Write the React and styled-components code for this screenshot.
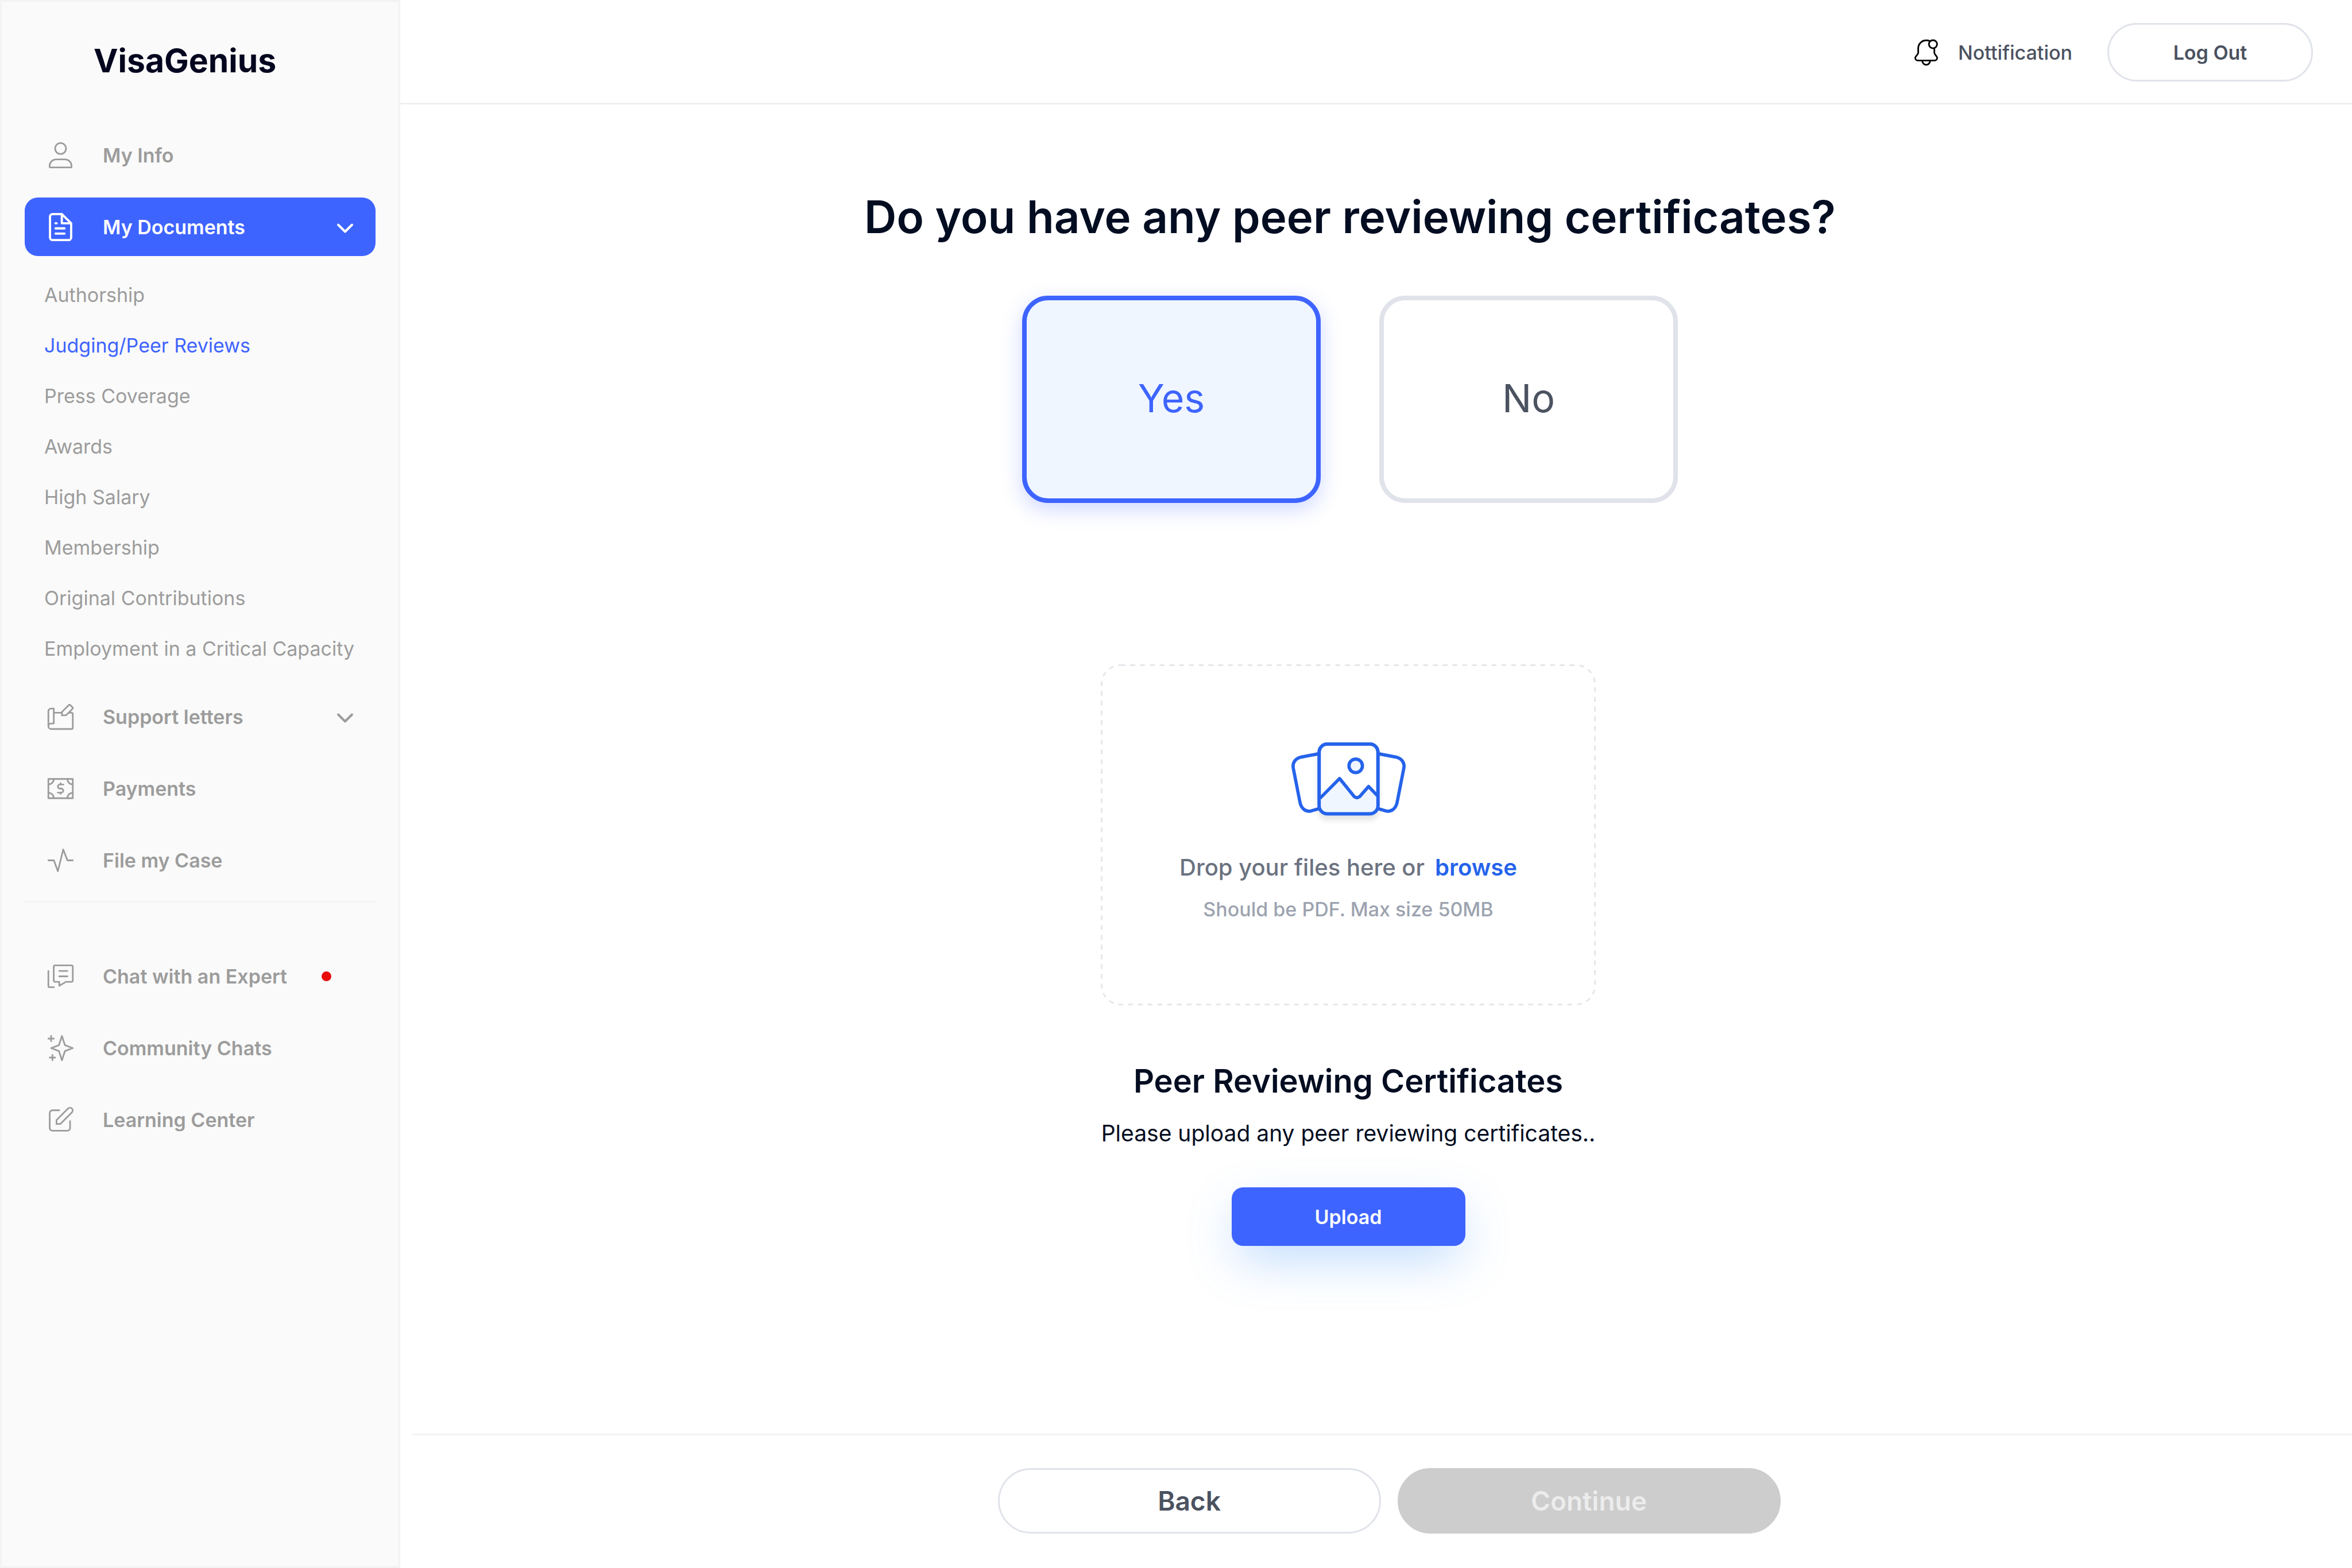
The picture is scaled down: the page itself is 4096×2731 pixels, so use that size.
import React, { useState } from 'react';
import styled, { createGlobalStyle, css } from 'styled-components';

const color = {
  ink: '#030d21',
  brand: '#3e64ff',
  link: '#2563eb',
  tint: '#eff6ff',
  slate: '#4b5260',
  muted: '#9c9c9c',
  line: '#f3f3f3',
  outline: '#e0e3ea',
};

const GlobalStyle = createGlobalStyle`
  *, *::before, *::after { box-sizing: border-box; }
  body { margin: 0; background: #fff; color: ${color.ink}; font-family: Inter, "Liberation Sans", sans-serif; }
  h1, h2, p, ul { margin: 0; padding: 0; }
  ul { list-style: none; }
  a { color: inherit; text-decoration: none; }
  button { margin: 0; padding: 0; border: 0; background: none; color: inherit; font: inherit; cursor: pointer; }
  svg { display: block; flex: none; }
`;

const Page = styled.div`
  display: flex;
  min-height: 100vh;
`;

/* Sidebar */

const Sidebar = styled.aside`
  flex: none;
  width: 697px;
  padding: 68px 40px 0;
  background: #fafafa;
  border: 3px solid ${color.line};
`;

const Logo = styled.a`
  display: block;
  width: fit-content;
  margin: 0 0 78px 120px;
  font-size: 57px;
  font-weight: 700;
  line-height: 70px;
  color: #04061f;
`;

const Menu = styled.ul`
  display: flex;
  flex-direction: column;
  gap: 23px;
`;

const itemStyle = css`
  display: flex;
  align-items: center;
  width: 100%;
  height: 102px;
  padding: 0 29px 0 37px;
  border-radius: 23px;
  gap: 48px;
  font-size: 34px;
  font-weight: 600;
  text-align: left;
  color: ${(p) => (p.$active ? '#fff' : color.muted)};
  background: ${(p) => (p.$active ? color.brand : 'transparent')};
`;

const ItemLink = styled.a`${itemStyle}`;
const ItemButton = styled.button`${itemStyle}`;

const Unread = styled.span`
  width: 17px;
  height: 17px;
  margin-left: 12px;
  border-radius: 50%;
  background: #e90a0a;
`;

const Submenu = styled.ul`
  padding: 24px 34px 0;
`;

const SubLink = styled.a`
  display: block;
  font-size: 34px;
  line-height: 88px;
  white-space: nowrap;
  color: ${(p) => (p.$active ? color.brand : color.muted)};
`;

const Divider = styled.hr`
  height: 3px;
  margin: 20px 0 77px;
  border: 0;
  background: ${color.line};
`;

/* Main column */

const Main = styled.div`
  display: flex;
  flex: 1;
  flex-direction: column;
  min-width: 0;
`;

const Header = styled.header`
  display: flex;
  align-items: center;
  justify-content: flex-end;
  height: 182px;
  padding: 3px 68px 0 0;
  gap: 61px;
  border-bottom: 3px solid #eef0f3;
`;

const Notification = styled.a`
  display: flex;
  align-items: center;
  gap: 30px;
  font-size: 34px;
  font-weight: 500;
  color: ${color.slate};

  svg { color: #000; }
`;

const PillButton = styled.button`
  width: ${(p) => (p.$large ? '667px' : '358px')};
  height: ${(p) => (p.$large ? '114px' : '102px')};
  border: 3px solid ${(p) => (p.disabled ? '#cdcdcd' : color.outline)};
  border-radius: 57px;
  background: ${(p) => (p.disabled ? '#cdcdcd' : '#fff')};
  color: ${(p) => (p.disabled ? '#ececec' : color.slate)};
  font-size: ${(p) => (p.$large ? '46px' : '34px')};
  font-weight: 600;
`;

const Question = styled.section`
  display: flex;
  flex-direction: column;
  align-items: center;
  padding: 148px 91px 0 0;
  gap: 89px;
`;

const Title = styled.h1`
  font-size: 78px;
  font-weight: 600;
  line-height: 96px;
`;

const Choices = styled.div`
  display: flex;
  gap: 102px;
`;

const Choice = styled.button`
  width: 520px;
  height: 361px;
  padding-bottom: 6px;
  border: 8px solid ${(p) => (p.$selected ? color.brand : color.outline)};
  border-radius: 45px;
  background: ${(p) => (p.$selected ? color.tint : '#fff')};
  box-shadow: ${(p) => (p.$selected ? '0 11px 34px rgba(62, 100, 255, 0.25)' : 'none')};
  color: ${(p) => (p.$selected ? color.brand : color.slate)};
  font-size: 68px;
`;

const UploadSection = styled.section`
  display: flex;
  flex: 1;
  flex-direction: column;
  align-items: center;
  padding: 281px 97px 0 0;
`;

const DropZone = styled.div`
  position: relative;
  display: flex;
  flex-direction: column;
  align-items: center;
  width: 862px;
  height: 594px;
  padding-top: 136px;
`;

const DashedOutline = styled.svg`
  position: absolute;
  inset: 0;
  width: 100%;
  height: 100%;
  pointer-events: none;
`;

const DropText = styled.p`
  display: flex;
  margin-top: 49px;
  gap: 18px;
  font-size: 40px;
  font-weight: 500;
  line-height: 48px;
  color: #6b7280;
`;

const Browse = styled.button`
  font-weight: 600;
  color: ${color.link};
`;

const Hint = styled.p`
  margin-top: 29px;
  font-size: 34px;
  font-weight: 500;
  line-height: 40px;
  color: #9ca3af;
`;

const Subtitle = styled.h2`
  margin-top: 97px;
  font-size: 56px;
  font-weight: 600;
  line-height: 70px;
`;

const Description = styled.p`
  margin-top: 32px;
  font-size: 39px;
  line-height: 48px;
`;

const UploadButton = styled.button`
  width: 407px;
  height: 102px;
  margin-top: 70px;
  border-radius: 20px;
  background: ${color.brand};
  box-shadow: 0 31px 85px -12px rgba(77, 155, 250, 0.4);
  color: #fff;
  font-size: 34px;
  font-weight: 600;
`;

const Footer = styled.footer`
  display: flex;
  justify-content: center;
  margin-left: 21px;
  padding: 57px 0 60px 24px;
  gap: 29px;
  border-top: 3px solid ${color.line};
`;

/* Icons */

const Glyph = ({ weight = 1, children }) => (
  <svg width="51" height="51" viewBox="-1 -1 18 18" fill="none" stroke="currentColor" strokeWidth={weight} strokeLinecap="round" strokeLinejoin="round" aria-hidden="true">
    {children}
  </svg>
);

const UserIcon = () => (
  <Glyph>
    <circle cx="8" cy="3.83" r="3.35" />
    <path d="M5.25 10.5h5.5a4 4 0 0 1 4 4v.5a.45.45 0 0 1-.45.45H1.7a.45.45 0 0 1-.45-.45v-.5a4 4 0 0 1 4-4z" />
  </Glyph>
);

const DocumentIcon = () => (
  <Glyph weight={1.35}>
    <path d="M8.75 0H3.1a1.6 1.6 0 0 0-1.6 1.6v12.8A1.6 1.6 0 0 0 3.1 16h9.8a1.6 1.6 0 0 0 1.6-1.6V5.65L8.75 0v5.65h5.75" />
    <path d="M4.9 5.65h.65M4.9 8.8h5.5M4.9 12h5.5" />
  </Glyph>
);

const LetterIcon = () => (
  <Glyph>
    <path d="M.5 13.8V4.6a1.7 1.7 0 0 1 1.7-1.7h1.63v9.2H2.2a1.7 1.7 0 0 0 0 3.4h12.5a.8.8 0 0 0 .8-.8V6.3a.8.8 0 0 0-.8-.8h-1.6M3.83 5.5h4.8" />
    <path strokeLinejoin="miter" d="M8.83 7.1V5L12.9.9a.85.85 0 0 1 1.2 0L15.2 2a.85.85 0 0 1 0 1.2L11.25 7.1z" />
  </Glyph>
);

const CashIcon = () => (
  <Glyph>
    <path d="M.5 2.1h15v11.8H.5z" />
    <path d="M3.8 2.1A3.3 3.3 0 0 1 .5 5.4M12.2 2.1a3.3 3.3 0 0 0 3.3 3.3M3.8 13.9A3.3 3.3 0 0 0 .5 10.6M12.2 13.9a3.3 3.3 0 0 1 3.3-3.3" />
    <path d="M9.7 5.5H7.6a1.25 1.25 0 0 0 0 2.5h.8a1.25 1.25 0 0 1 0 2.5H6.3M8 4.7v.8M8 10.5v.8" />
  </Glyph>
);

const PulseIcon = () => (
  <Glyph>
    <path d="M.5 8h3.4l2.43 6.7L9.63 1.3 12.2 8h3.3" />
  </Glyph>
);

const ChatIcon = () => (
  <Glyph>
    <path d="M4.6 1.25h10.1a.8.8 0 0 1 .8.8v8.55a.8.8 0 0 1-.8.8h-3.45L7.2 13.8v-2.4H4.6a.8.8 0 0 1-.8-.8V2.05a.8.8 0 0 1 .8-.8zM7.2 4.67h5M7.2 8h5M.5 4.67v9.2a.8.8 0 0 0 .8.8h2.6" />
  </Glyph>
);

const SparkIcon = () => (
  <Glyph>
    <path d="M8.83.5l1.84 5.67L15.5 8l-4.83 1.83-1.84 5.67L7 9.83 2.2 8 7 6.17zM2.17.5v3.3M.5 2.17h3.3M3 12.2v3.3M1.33 13.83h3.3" />
  </Glyph>
);

const EditIcon = () => (
  <Glyph>
    <path d="M7.2 2.1H3a1.67 1.67 0 0 0-1.67 1.7V13A1.67 1.67 0 0 0 3 14.67h9.2A1.67 1.67 0 0 0 13.83 13V8.75" />
    <path strokeLinejoin="miter" d="M5.5 10.5V8.1L12.65.98a1.67 1.67 0 0 1 2.36 2.36L7.9 10.5z" />
  </Glyph>
);

const BellIcon = () => (
  <Glyph>
    <path d="M10.1.9A5 5 0 0 0 8 .5a4.92 4.92 0 0 0-4.92 4.8v3c0 .95-1.83 1.85-1.83 2.95 0 1 .7 1.65 1.6 1.65h10.3c.9 0 1.6-.65 1.6-1.65 0-1.1-1.75-2-1.75-2.95V5.5" />
    <path d="M5.6 12.9a2.4 2.65 0 0 0 4.8 0" />
    <circle cx="12.17" cy="2.92" r="2.5" />
  </Glyph>
);

const ChevronIcon = styled(({ className }) => (
  <svg className={className} width="48" height="48" viewBox="0 0 48 48" fill="none" stroke="currentColor" strokeWidth="4" strokeLinecap="round" strokeLinejoin="round" aria-hidden="true">
    <path d="M12 20.5l12 12 12-12" />
  </svg>
))`
  margin-left: auto;
`;

const PicturesIcon = () => (
  <svg width="199" height="145" viewBox="0 0 280 204" fill="none" stroke={color.link} strokeWidth="8" strokeLinejoin="round" aria-hidden="true">
    <defs>
      <filter id="card-shadow" x="-20%" y="-20%" width="140%" height="150%">
        <feDropShadow dx="0" dy="12" stdDeviation="6" floodColor="#000" floodOpacity="0.1" />
      </filter>
    </defs>
    <path d="M66 28L24 36C10 39 2 50 4.5 63L21 147C24 162 35 171 48 168L66 163" />
    <path d="M214 28L256 36C270 39 278 50 275.5 63L259 147C256 162 245 171 232 168L214 163" />
    <rect x="68" y="4" width="144" height="171" rx="20" fill="#fff" filter="url(#card-shadow)" />
    <path d="M70 137L118 88.5L154 133Q160.5 138 167 133L189 108L210 131V155Q210 173 192 173H88Q70 173 70 155z" fill={color.tint} stroke="none" />
    <path d="M70 137L118 88.5L154 133Q160.5 138 167 133L189 108L211 131" />
    <rect x="68" y="4" width="144" height="171" rx="20" />
    <circle cx="157.5" cy="57.5" r="16.5" fill={color.tint} />
  </svg>
);

/* Content */

const documents = [
  'Authorship',
  'Judging/Peer Reviews',
  'Press Coverage',
  'Awards',
  'High Salary',
  'Membership',
  'Original Contributions',
  'Employment in a Critical Capacity',
];

const Navigation = () => (
  <nav>
    <Menu>
      <li><ItemLink href="#info"><UserIcon />My Info</ItemLink></li>
      <li>
        <ItemButton type="button" $active aria-expanded="true"><DocumentIcon />My Documents<ChevronIcon /></ItemButton>
        <Submenu>
          {documents.map((name) => (
            <li key={name}><SubLink href="#documents" $active={name === 'Judging/Peer Reviews'}>{name}</SubLink></li>
          ))}
        </Submenu>
      </li>
      <li><ItemButton type="button" aria-expanded="false"><LetterIcon />Support letters<ChevronIcon /></ItemButton></li>
      <li><ItemLink href="#payments"><CashIcon />Payments</ItemLink></li>
      <li><ItemLink href="#case"><PulseIcon />File my Case</ItemLink></li>
    </Menu>
    <Divider />
    <Menu>
      <li><ItemLink href="#expert"><ChatIcon />Chat with an Expert<Unread /></ItemLink></li>
      <li><ItemLink href="#community"><SparkIcon />Community Chats</ItemLink></li>
      <li><ItemLink href="#learning"><EditIcon />Learning Center</ItemLink></li>
    </Menu>
  </nav>
);

export default function App() {
  const [answer, setAnswer] = useState('Yes');

  return (
    <>
      <GlobalStyle />
      <Page>
        <Sidebar>
          <Logo href="#home">VisaGenius</Logo>
          <Navigation />
        </Sidebar>
        <Main>
          <Header>
            <Notification href="#notifications"><BellIcon />Nottification</Notification>
            <PillButton type="button">Log Out</PillButton>
          </Header>
          <Question>
            <Title>Do you have any peer reviewing certificates?</Title>
            <Choices>
              {['Yes', 'No'].map((label) => (
                <Choice key={label} type="button" $selected={answer === label} aria-pressed={answer === label} onClick={() => setAnswer(label)}>
                  {label}
                </Choice>
              ))}
            </Choices>
          </Question>
          <UploadSection>
            <DropZone>
              <DashedOutline aria-hidden="true">
                <rect x="1.5" y="1.5" width="859" height="591" rx="33" fill="none" stroke="#e6e7ec" strokeWidth="3" strokeDasharray="8.5 8.5" />
              </DashedOutline>
              <PicturesIcon />
              <DropText>Drop your files here or <Browse type="button">browse</Browse></DropText>
              <Hint>Should be PDF. Max size 50MB</Hint>
            </DropZone>
            <Subtitle>Peer Reviewing Certificates</Subtitle>
            <Description>Please upload any peer reviewing certificates..</Description>
            <UploadButton type="button">Upload</UploadButton>
          </UploadSection>
          <Footer>
            <PillButton type="button" $large>Back</PillButton>
            <PillButton type="button" $large disabled>Continue</PillButton>
          </Footer>
        </Main>
      </Page>
    </>
  );
}
